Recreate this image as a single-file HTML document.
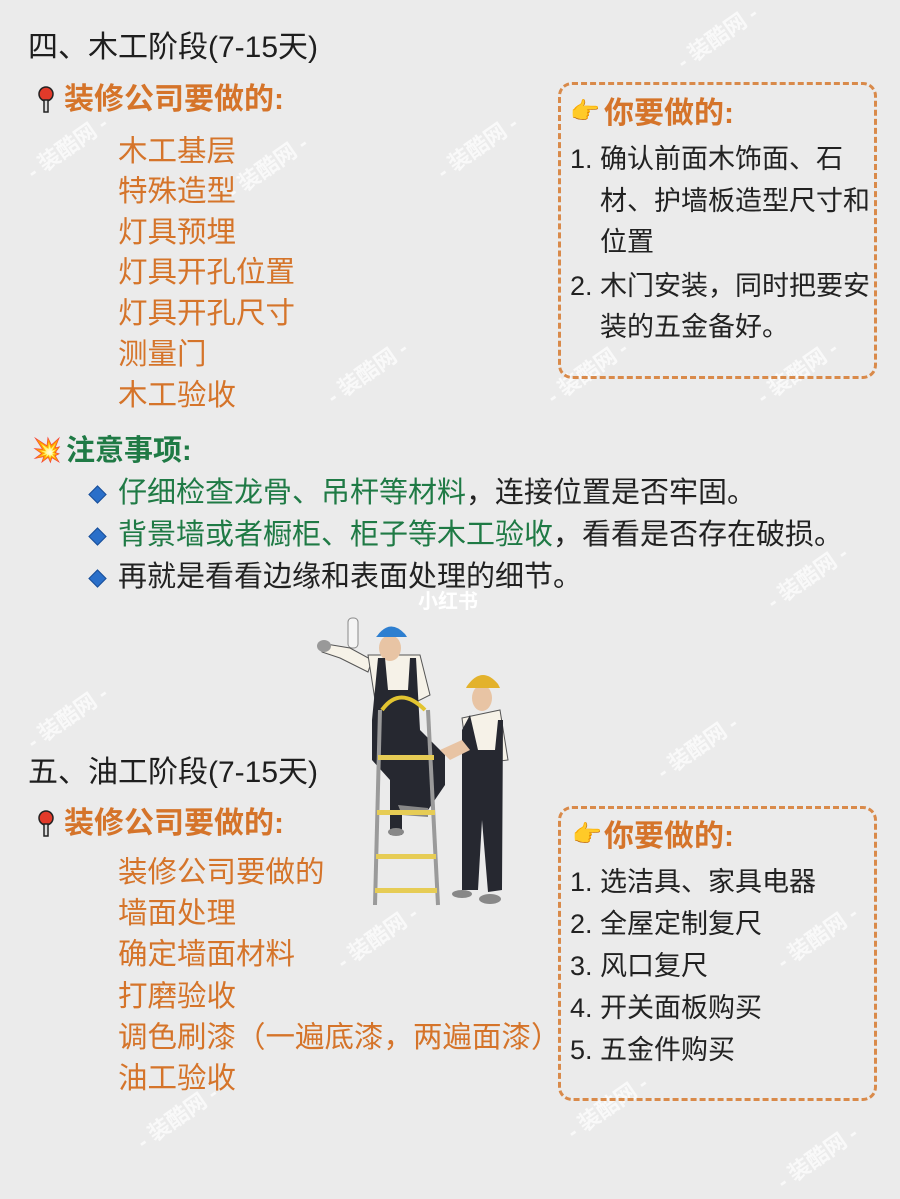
<!DOCTYPE html>
<html><head><meta charset="utf-8">
<style>
body{margin:0;background:#ebebeb;}
#p{position:relative;width:900px;height:1199px;overflow:hidden;background:#ebebeb;font-family:"Liberation Sans","Noto Sans CJK SC",sans-serif;}
.t{position:absolute;white-space:nowrap;line-height:1;}
.h{font-size:30px;color:#1e1e1e;}
.o{font-size:29.5px;color:#d5742a;}
.ob{font-size:30px;color:#d5742a;font-weight:bold;}
.g{font-size:29px;color:#1f7a45;}
.k{font-size:27px;color:#222;}
.box{position:absolute;border:3px dashed #d98a4a;border-radius:14px;box-sizing:border-box;}
.dia{position:absolute;width:11px;height:11px;background:#2a6fc9;transform:rotate(45deg);border:1px solid #1a4f99;}
.wm{position:absolute;color:rgba(255,255,255,.7);font-size:22px;font-weight:bold;transform:rotate(-35deg);white-space:nowrap;}
</style></head><body><div id="p">
<div class="wm" style="left:670px;top:20px">- 装酷网 -</div>
<div class="wm" style="left:20px;top:130px">- 装酷网 -</div>
<div class="wm" style="left:220px;top:150px">- 装酷网 -</div>
<div class="wm" style="left:430px;top:130px">- 装酷网 -</div>
<div class="wm" style="left:320px;top:355px">- 装酷网 -</div>
<div class="wm" style="left:540px;top:355px">- 装酷网 -</div>
<div class="wm" style="left:750px;top:355px">- 装酷网 -</div>
<div class="wm" style="left:760px;top:560px">- 装酷网 -</div>
<div class="wm" style="left:20px;top:700px">- 装酷网 -</div>
<div class="wm" style="left:650px;top:730px">- 装酷网 -</div>
<div class="wm" style="left:330px;top:920px">- 装酷网 -</div>
<div class="wm" style="left:770px;top:920px">- 装酷网 -</div>
<div class="wm" style="left:130px;top:1100px">- 装酷网 -</div>
<div class="wm" style="left:560px;top:1090px">- 装酷网 -</div>
<div class="wm" style="left:770px;top:1140px">- 装酷网 -</div>

<div class="t h" style="left:28px;top:33px">四、木工阶段(7-15天)</div>
<svg style="position:absolute;left:36px;top:86px" width="20" height="28"><circle cx="10" cy="8" r="7" fill="#e23a2a" stroke="#222" stroke-width="1.5"/><rect x="8" y="14" width="4" height="12" fill="#ddd" stroke="#222" stroke-width="1.5"/></svg>
<div class="t ob" style="left:64px;top:85px">装修公司要做的:</div>
<div class="t o" style="left:118px;top:137px">木工基层</div>
<div class="t o" style="left:118px;top:177px">特殊造型</div>
<div class="t o" style="left:118px;top:218px">灯具预埋</div>
<div class="t o" style="left:118px;top:258px">灯具开孔位置</div>
<div class="t o" style="left:118px;top:299px">灯具开孔尺寸</div>
<div class="t o" style="left:118px;top:340px">测量门</div>
<div class="t o" style="left:118px;top:381px">木工验收</div>

<div class="box" style="left:558px;top:82px;width:319px;height:297px"></div>
<div class="t" style="left:570px;top:100px;font-size:24px">👉</div>
<div class="t ob" style="left:604px;top:99px">你要做的:</div>
<div class="t k" style="left:570px;top:146px">1.</div>
<div class="t k" style="left:600px;top:146px">确认前面木饰面、石</div>
<div class="t k" style="left:600px;top:188px">材、护墙板造型尺寸和</div>
<div class="t k" style="left:600px;top:229px">位置</div>
<div class="t k" style="left:570px;top:273px">2.</div>
<div class="t k" style="left:600px;top:273px">木门安装，同时把要安</div>
<div class="t k" style="left:600px;top:314px">装的五金备好。</div>

<div class="t" style="left:32px;top:439px;font-size:24px">💥</div>
<div class="t g" style="left:66px;top:437px;font-weight:bold">注意事项:</div>
<div class="dia" style="left:91px;top:488px"></div>
<div class="t g" style="left:118px;top:479px">仔细检查龙骨、吊杆等材料<span style="color:#222">，连接位置是否牢固。</span></div>
<div class="dia" style="left:91px;top:530px"></div>
<div class="t g" style="left:118px;top:521px">背景墙或者橱柜、柜子等木工验收<span style="color:#222">，看看是否存在破损。</span></div>
<div class="dia" style="left:91px;top:572px"></div>
<div class="t" style="left:118px;top:563px;font-size:29px;color:#222">再就是看看边缘和表面处理的细节。</div>
<div class="t" style="left:418px;top:592px;font-size:20px;color:#fff;font-weight:bold">小红书</div>

<svg style="position:absolute;left:310px;top:610px" width="200" height="300">
<rect x="38" y="8" width="10" height="30" rx="4" fill="#f4f4f4" stroke="#888"/>
<path d="M10 33 L40 38 L62 50 L58 62 L30 48 L12 42Z" fill="#f6f2e8" stroke="#555"/>
<ellipse cx="14" cy="36" rx="7" ry="6" fill="#999"/>
<path d="M58 45 L110 45 L120 85 L100 95 L65 90Z" fill="#f6f2e8" stroke="#555"/>
<ellipse cx="80" cy="38" rx="11" ry="13" fill="#e8c4a4"/>
<path d="M67 26 Q80 8 95 24 L97 27 L66 27Z" fill="#2e7fd0"/>
<path d="M68 48 L75 48 L78 80 L98 80 L100 48 L106 48 L110 120 L135 145 L135 175 L118 200 L92 200 L92 225 L80 225 L80 170 L62 150 L62 110Z" fill="#262830"/>
<path d="M88 195 L118 198 L118 207 L92 205Z" fill="#888"/>
<ellipse cx="86" cy="222" rx="8" ry="4" fill="#888"/>
<path d="M72 100 Q90 75 115 100" fill="none" stroke="#e2c430" stroke-width="4"/>
<line x1="70" y1="100" x2="65" y2="295" stroke="#9a9a9a" stroke-width="4"/>
<line x1="118" y1="100" x2="128" y2="295" stroke="#9a9a9a" stroke-width="4"/>
<rect x="68" y="145" width="56" height="5" fill="#e6cc55"/>
<rect x="67" y="200" width="58" height="5" fill="#e6cc55"/>
<rect x="66" y="244" width="60" height="5" fill="#e6cc55"/>
<rect x="65" y="278" width="62" height="5" fill="#e6cc55"/>
<path d="M152 108 L190 100 L198 150 L158 155Z" fill="#f6f2e8" stroke="#555"/>
<ellipse cx="172" cy="88" rx="10" ry="13" fill="#e8c4a4"/>
<path d="M157 76 Q172 55 188 74 L190 78 L156 78Z" fill="#e3b22c"/>
<path d="M152 120 L160 105 L168 140 L185 140 L188 110 L193 110 L192 280 L178 282 L172 210 L168 280 L152 280Z" fill="#262830"/>
<path d="M130 140 L152 130 L160 140 L140 150Z" fill="#e8c4a4"/>
<ellipse cx="152" cy="284" rx="10" ry="4" fill="#888"/>
<ellipse cx="180" cy="289" rx="11" ry="5" fill="#888"/>
</svg>

<div class="t h" style="left:28px;top:758px">五、油工阶段(7-15天)</div>
<svg style="position:absolute;left:36px;top:810px" width="20" height="28"><circle cx="10" cy="8" r="7" fill="#e23a2a" stroke="#222" stroke-width="1.5"/><rect x="8" y="14" width="4" height="12" fill="#ddd" stroke="#222" stroke-width="1.5"/></svg>
<div class="t ob" style="left:64px;top:809px">装修公司要做的:</div>
<div class="t o" style="left:118px;top:858px">装修公司要做的</div>
<div class="t o" style="left:118px;top:899px">墙面处理</div>
<div class="t o" style="left:118px;top:940px">确定墙面材料</div>
<div class="t o" style="left:118px;top:982px">打磨验收</div>
<div class="t o" style="left:118px;top:1023px">调色刷漆（一遍底漆，两遍面漆）</div>
<div class="t o" style="left:118px;top:1064px">油工验收</div>

<div class="box" style="left:558px;top:806px;width:319px;height:295px"></div>
<div class="t" style="left:572px;top:823px;font-size:24px">👉</div>
<div class="t ob" style="left:604px;top:822px">你要做的:</div>
<div class="t k" style="left:570px;top:869px">1. 选洁具、家具电器</div>
<div class="t k" style="left:570px;top:911px">2. 全屋定制复尺</div>
<div class="t k" style="left:570px;top:953px">3. 风口复尺</div>
<div class="t k" style="left:570px;top:995px">4. 开关面板购买</div>
<div class="t k" style="left:570px;top:1037px">5. 五金件购买</div>
</div></body></html>
